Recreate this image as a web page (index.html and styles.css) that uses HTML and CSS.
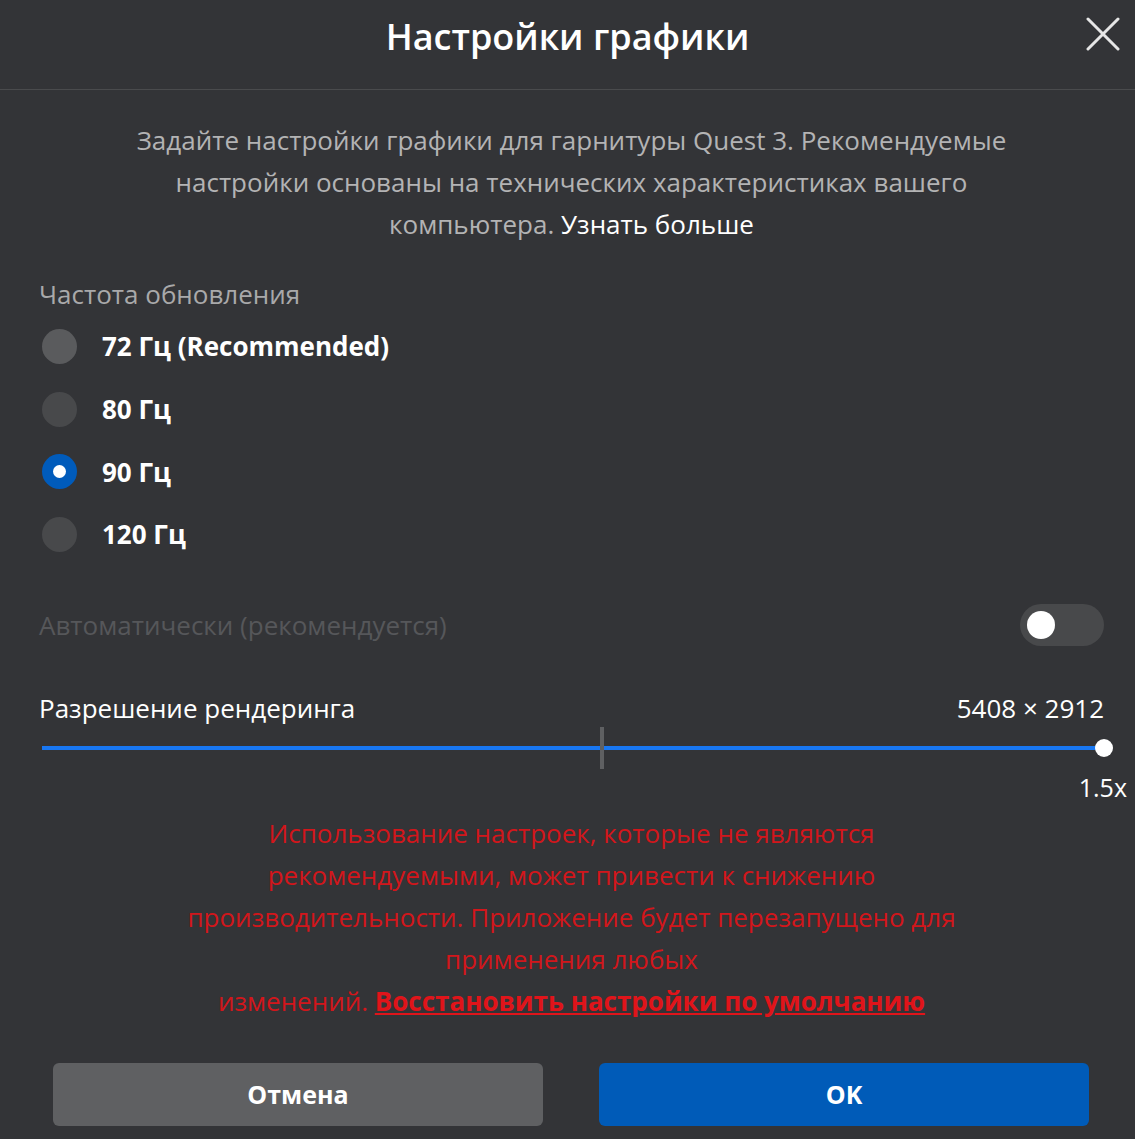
FILE: index.html
```html
<!DOCTYPE html>
<html lang="ru">
<head>
  <meta charset="UTF-8" />
  <meta name="viewport" content="width=device-width, initial-scale=1.0"/>
  <title>Настройки графики</title>
  <link rel="stylesheet" href="styles.css">
</head>
<body>

<div class="dialog">
  <header class="dialog-header">
    <h1>Настройки графики</h1>
    <button class="close" aria-label="Закрыть">
      <svg width="34" height="34" viewBox="0 0 34 34">
        <path d="M2 2 L32 32 M32 2 L2 32" stroke="#e6e6e6" stroke-width="3" stroke-linecap="round" fill="none"/>
      </svg>
    </button>
  </header>

  <div class="dialog-body">
    <p class="intro">
      Задайте настройки графики для гарнитуры Quest 3. Рекомендуемые<br>
      настройки основаны на технических характеристиках вашего<br>
      компьютера. <a href="#">Узнать больше</a>
    </p>

    <div class="section-label">Частота обновления</div>
    <ul class="radio-list">
      <li><span class="radio radio-light"></span>72 Гц (Recommended)</li>
      <li><span class="radio"></span>80 Гц</li>
      <li><span class="radio checked"></span>90 Гц</li>
      <li><span class="radio"></span>120 Гц</li>
    </ul>

    <div class="auto-row">
      <span>Автоматически (рекомендуется)</span>
      <span class="toggle"><span class="knob"></span></span>
    </div>

    <div class="res-row">
      <span>Разрешение рендеринга</span>
      <span>5408 × 2912</span>
    </div>
    <div class="slider">
      <div class="track"></div>
      <div class="tick"></div>
      <div class="thumb"></div>
    </div>
    <div class="scale">1.5x</div>

    <p class="warning">
      Использование настроек, которые не являются<br>
      рекомендуемыми, может привести к снижению<br>
      производительности. Приложение будет перезапущено для<br>
      применения любых<br>
      изменений. <a href="#">Восстановить настройки по умолчанию</a>
    </p>
  </div>

  <footer class="dialog-actions">
    <button class="btn btn-cancel">Отмена</button>
    <button class="btn btn-ok">OK</button>
  </footer>
</div>

</body>
</html>
```

FILE: styles.css
```css
body {
  font-family: 'Open Sans', 'Noto Sans', sans-serif;
  background-color: #333437;
  color: #ffffff;
  margin: 0;
  padding: 0;
}
.dialog {
  width: 1135px;
  height: 1139px;
}
.dialog-header {
  height: 89px;
  border-bottom: 1px solid #4a4b4d;
  display: flex;
  justify-content: center;
  align-items: center;
  position: relative;
}
.dialog-header h1 {
  margin: 0 0 17px 0;
  font-size: 36px;
  font-weight: 600;
}
.close {
  position: absolute;
  right: 15px;
  top: 17px;
  background: none;
  border: none;
  padding: 0;
  width: 34px;
  height: 34px;
  cursor: pointer;
}
.dialog-body {
  padding: 29px 31px 0 39px;
  font-size: 26px;
}
.intro {
  margin: 0;
  text-align: center;
  line-height: 42px;
  color: #b3b3b4;
}
.intro a {
  color: #ffffff;
  text-decoration: none;
}
.section-label {
  margin-top: 28px;
  line-height: 42px;
  color: #a9a9aa;
}
.radio-list {
  list-style: none;
  margin: 0;
  padding: 0 0 0 3px;
}
.radio-list li {
  height: 62.7px;
  display: flex;
  align-items: center;
  gap: 25px;
  font-weight: 700;
}
.radio {
  width: 35px;
  height: 35px;
  border-radius: 50%;
  background-color: #48494b;
  display: flex;
  align-items: center;
  justify-content: center;
}
.radio-light {
  background-color: #5a5b5d;
}
.radio.checked {
  background-color: #005bbb;
}
.radio.checked::after {
  content: "";
  width: 13px;
  height: 13px;
  border-radius: 50%;
  background-color: #ffffff;
}
.auto-row {
  margin-top: 38px;
  height: 42px;
  display: flex;
  justify-content: space-between;
  align-items: center;
  color: #56575a;
}
.toggle {
  width: 84px;
  height: 42px;
  border-radius: 21px;
  background-color: #48494b;
  display: flex;
  align-items: center;
  padding-left: 7px;
  box-sizing: border-box;
}
.knob {
  width: 28px;
  height: 28px;
  border-radius: 50%;
  background-color: #ffffff;
}
.res-row {
  margin-top: 43px;
  line-height: 38px;
  display: flex;
  justify-content: space-between;
}
.slider {
  position: relative;
  height: 42px;
  margin-left: 3px;
}
.track {
  position: absolute;
  left: 0;
  right: 0;
  top: 19px;
  height: 4px;
  background-color: #1877f2;
}
.tick {
  position: absolute;
  left: 558px;
  top: 0;
  width: 4px;
  height: 42px;
  background-color: #5f6062;
}
.thumb {
  position: absolute;
  right: -9px;
  top: 12px;
  width: 18px;
  height: 18px;
  border-radius: 50%;
  background-color: #ffffff;
}
.scale {
  font-size: 25px;
  line-height: 36px;
  text-align: right;
  margin-right: -23px;
}
.warning {
  margin: 7px 0 0 0;
  text-align: center;
  line-height: 42px;
  color: #d2161b;
}
.warning a {
  color: #e0141a;
  font-weight: 700;
  text-decoration: underline;
}
.dialog-actions {
  margin-top: 41px;
  padding: 0 46px 0 53px;
  display: flex;
  gap: 56px;
}
.btn {
  flex: 1;
  height: 63px;
  border: none;
  border-radius: 6px;
  color: #ffffff;
  font-family: inherit;
  font-size: 25px;
  font-weight: 700;
  cursor: pointer;
}
.btn-cancel {
  background-color: #5f6062;
}
.btn-ok {
  background-color: #005bb8;
}
```
